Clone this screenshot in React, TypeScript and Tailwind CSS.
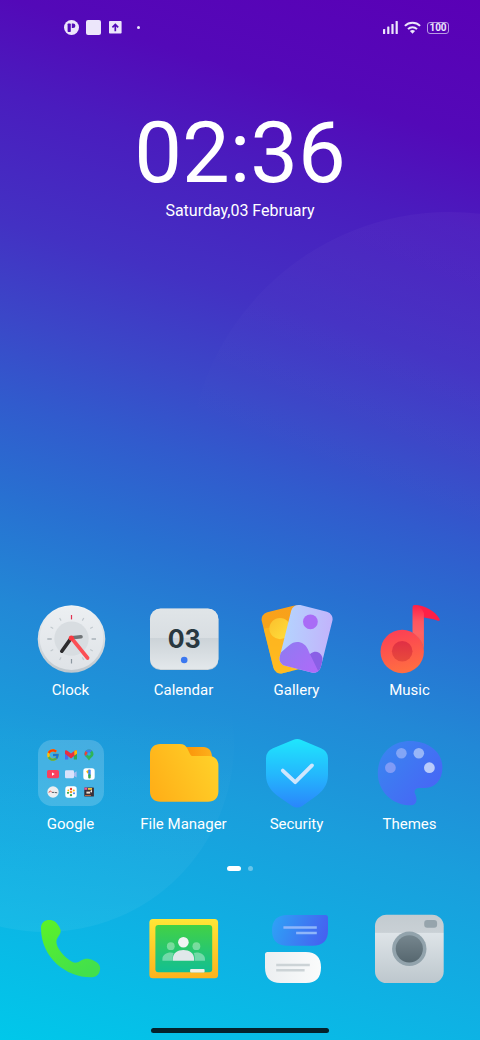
import type { ReactNode } from 'react';
import { FcGoogle } from 'react-icons/fc';

interface AppItem {
  name: string;
  icon: ReactNode;
}

function Wallpaper() {
  return (
    <svg
      className="absolute inset-0 h-full w-full"
      viewBox="0 0 480 1040"
      preserveAspectRatio="none"
      aria-hidden="true"
    >
      <defs>
        <linearGradient id="wpRight" x1="0.7" y1="0" x2="0.3" y2="1">
          <stop offset="0" stopColor="#fff" stopOpacity="0.035" />
          <stop offset="0.6" stopColor="#fff" stopOpacity="0" />
        </linearGradient>
        <linearGradient id="wpLeft" x1="0.5" y1="1" x2="0.5" y2="0">
          <stop offset="0" stopColor="#fff" stopOpacity="0.05" />
          <stop offset="0.6" stopColor="#fff" stopOpacity="0" />
        </linearGradient>
      </defs>
      <circle cx="450" cy="474" r="262" fill="url(#wpRight)" />
      <circle cx="45" cy="743" r="189" fill="url(#wpLeft)" />
    </svg>
  );
}

function StatusBar() {
  return (
    <header className="flex h-[55px] items-center justify-between pr-[31px] pl-16 text-[#ece6fb]">
      <div className="flex items-center gap-[7px]">
        <svg className="h-[15px] w-[15px]" viewBox="0 0 15 15">
          <circle cx="7.5" cy="7.5" r="7.5" fill="currentColor" />
          <rect x="3.6" y="3.4" width="3.2" height="8.6" rx="0.8" fill="#520cb9" />
          <path d="M7.8 3.4h1.3a2.3 2.3 0 0 1 0 4.6H7.8z" fill="#520cb9" />
        </svg>
        <svg className="h-[15px] w-[15px]" viewBox="0 0 15 15">
          <rect width="15" height="15" rx="2" fill="currentColor" />
        </svg>
        <svg className="ml-px h-[13px] w-[13px]" viewBox="0 0 13 13">
          <rect width="12.6" height="12.6" rx="0.8" fill="currentColor" />
          <path
            d="M6.3 10.2V3.6M3.4 6.3l2.9-2.9 2.9 2.9"
            fill="none"
            stroke="#520cb9"
            strokeWidth="1.7"
          />
        </svg>
        <span className="ml-2 h-[3px] w-[3px] rounded-full bg-[#ece6fb]" />
      </div>
      <div className="flex items-center gap-1.5">
        <svg className="h-[13px] w-[15px]" viewBox="0 0 15 13" fill="currentColor">
          <rect x="0" y="8" width="2.2" height="5" rx="0.6" />
          <rect x="4.2" y="5.4" width="2.2" height="7.6" rx="0.6" />
          <rect x="8.4" y="3" width="2.2" height="10" rx="0.6" />
          <rect x="12.6" y="0" width="2.2" height="13" rx="0.6" />
        </svg>
        <svg className="h-[13px] w-[17px]" viewBox="0 0 17 13" fill="none" stroke="currentColor">
          <path d="M0.9 4.9a10.8 10.8 0 0 1 15.2 0" strokeWidth="2" />
          <path d="M4 8.1a6.4 6.4 0 0 1 9 0" strokeWidth="2" />
          <path d="M8.5 12.8 5.9 10.1a3.8 3.8 0 0 1 5.2 0z" fill="currentColor" stroke="none" />
        </svg>
        <span className="flex h-3 w-[22px] items-center justify-center rounded-[3px] border border-[#b79be3] text-[10px] leading-none font-bold">
          100
        </span>
      </div>
    </header>
  );
}

function ClockIcon() {
  return (
    <svg className="h-[72px] w-[72px]" viewBox="0 0 72 72">
      <defs>
        <linearGradient id="clkRim" x1="0" y1="0" x2="0" y2="1">
          <stop offset="0" stopColor="#f1f4f6" />
          <stop offset="1" stopColor="#bfc7cd" />
        </linearGradient>
        <linearGradient id="clkFace" x1="0" y1="0" x2="0" y2="1">
          <stop offset="0" stopColor="#eceff2" />
          <stop offset="1" stopColor="#dfe3e7" />
        </linearGradient>
      </defs>
      <circle cx="36.5" cy="36" r="33.8" fill="url(#clkRim)" />
      <circle cx="36.5" cy="35.2" r="31.8" fill="url(#clkFace)" />
      <circle cx="36.5" cy="35.6" r="17.2" fill="#d8dde1" />
      <g strokeWidth="1.2">
        <path d="M36.5 12v4.4" stroke="#e2314f" />
        <path d="M36.5 56v4.4M12.3 36h4.4M56.600 36h4.4" stroke="#8b979f" />
        <path
          d="M24.6 15l1.5 2.6M48.8 15l-1.5 2.6M15.6 24l2.6 1.5M57.8 24l-2.6 1.5M15.6 48l2.6-1.5M57.8 48l-2.6-1.5M24.6 57l1.5-2.6M48.8 57l-1.5-2.6"
          stroke="#c2c9ce"
        />
      </g>
      <g strokeLinecap="round">
        <path d="M37 34.8l9-1" stroke="#707477" strokeWidth="3.6" />
        <path d="M36 35.4l-9.2 12.8" stroke="#2c2c2e" strokeWidth="3.6" />
        <path d="M36.4 35l16.2 20" stroke="#fb4f55" strokeWidth="3.6" />
      </g>
      <circle cx="36.3" cy="35" r="2.6" fill="#f9383f" />
    </svg>
  );
}

function CalendarIcon() {
  return (
    <svg className="h-[72px] w-[72px]" viewBox="0 0 72 72">
      <defs>
        <linearGradient id="calTop" x1="0" y1="0" x2="0" y2="1">
          <stop offset="0" stopColor="#e0e5e8" />
          <stop offset="0.48" stopColor="#d9dee2" />
          <stop offset="0.485" stopColor="#ccd3d8" />
          <stop offset="1" stopColor="#e3e8eb" />
        </linearGradient>
      </defs>
      <rect x="2" y="5.8" width="68.4" height="61.2" rx="10.5" fill="#c3ccd2" />
      <rect x="2" y="5.4" width="68.4" height="60.8" rx="10.5" fill="url(#calTop)" />
      <text
        x="36.2"
        y="45.4"
        textAnchor="middle"
        className="fill-[#293840] font-[Inter,sans-serif] text-[25px] font-bold"
      >
        03
      </text>
      <circle cx="36.2" cy="57" r="3.3" fill="#3b78f0" />
    </svg>
  );
}

function GalleryIcon() {
  return (
    <svg className="h-[72px] w-[72px]" viewBox="0 0 72 72">
      <defs>
        <linearGradient id="galBack" x1="0" y1="0" x2="0" y2="1">
          <stop offset="0" stopColor="#f9a01b" />
          <stop offset="0.3" stopColor="#f8a31a" />
          <stop offset="1" stopColor="#ffc226" />
        </linearGradient>
        <linearGradient id="galSun" x1="0" y1="0" x2="1" y2="1">
          <stop offset="0" stopColor="#fbc02d" />
          <stop offset="1" stopColor="#ffe03c" />
        </linearGradient>
        <linearGradient id="galFront" x1="0" y1="0.4" x2="1" y2="0.5">
          <stop offset="0" stopColor="#b0dcff" />
          <stop offset="1" stopColor="#c3b2fb" />
        </linearGradient>
        <linearGradient id="galHill" x1="0" y1="0" x2="1" y2="0.6">
          <stop offset="0" stopColor="#8a7df0" />
          <stop offset="1" stopColor="#ad6bf8" />
        </linearGradient>
        <clipPath id="galBackClip">
          <rect x="6" y="5" width="42" height="63" rx="7.5" transform="rotate(-14 27 36.5)" />
        </clipPath>
        <clipPath id="galClip">
          <rect x="23.8" y="4.5" width="42.4" height="62.6" rx="7.5" transform="rotate(14 45 36)" />
        </clipPath>
      </defs>
      <g clipPath="url(#galBackClip)">
        <rect x="-4" width="76" height="72" fill="url(#galBack)" />
        <path d="M-4 27l34-7v52H-4z" fill="#ffb91f" opacity="0.7" />
        <circle cx="19" cy="25.6" r="10.6" fill="url(#galSun)" />
      </g>
      <g clipPath="url(#galClip)">
        <rect x="10" width="62" height="72" fill="url(#galFront)" />
        <path d="M46 56c2-5 5.500-7.400 9-7.200 3.600.3 5.800 3.200 6.500 6.600L60 74z" fill="#8a5fe6" />
        <path
          d="M12 61c3-8 10.500-14 16-18.600 4.500-3.900 10-4.400 14.500-1.400 3 2 4.200 4.600 5.500 8L60 74H12z"
          fill="url(#galHill)"
        />
      </g>
      <circle cx="49.4" cy="18.8" r="7.4" fill="#a96cf6" />
    </svg>
  );
}

function MusicIcon() {
  return (
    <svg className="h-[72px] w-[72px]" viewBox="0 0 72 72">
      <defs>
        <linearGradient id="musDisc" x1="0" y1="0" x2="0.2" y2="1">
          <stop offset="0" stopColor="#fb3c56" />
          <stop offset="1" stopColor="#ff6c42" />
        </linearGradient>
        <linearGradient id="musStem" x1="0" y1="0" x2="0" y2="1">
          <stop offset="0" stopColor="#fd1f48" />
          <stop offset="0.35" stopColor="#ff5560" />
          <stop offset="0.6" stopColor="#ff6263" />
          <stop offset="1" stopColor="#fe6149" />
        </linearGradient>
        <linearGradient id="musHole" x1="0" y1="0" x2="0" y2="1">
          <stop offset="0" stopColor="#e02f45" />
          <stop offset="1" stopColor="#e84a3b" />
        </linearGradient>
      </defs>
      <path
        d="M40.5 1.900c9-.2 20.800 5.600 25 13.800.7 1.600-.2 2.500-1.600 2C59 15.800 55 15.300 50.200 14.400z"
        fill="#fd1f48"
      />
      <circle cx="28.2" cy="48.500" r="21.700" fill="url(#musDisc)" />
      <path
        d="M38.500 4.200q0-2.300 2.400-2.300 5 0 9 8V48.500C49.900 40 45 34 38.500 29.400z"
        fill="url(#musStem)"
      />
      <circle cx="28.2" cy="48.200" r="10.300" fill="url(#musHole)" />
    </svg>
  );
}

function GoogleFolderIcon() {
  return (
    <div className="flex h-[72px] w-[72px] items-center justify-center">
      <div className="grid h-[66px] w-[66px] grid-cols-3 content-center items-center justify-items-center gap-x-1 gap-y-1.5 rounded-[14px] bg-white/18 px-2">
        <FcGoogle className="h-3.5 w-3.5" />
        <svg className="h-3 w-3" viewBox="0 0 12 12">
          <path d="M0 2.500V10.500h3.200V5z" fill="#4a6cf0" />
          <path d="M12 2.500V10.500H8.800V5z" fill="#34a853" />
          <path
            d="M0 2.500C0 1 1.600 1 2.700 2L6 4.600 9.300 2C10.400 1 12 1 12 2.500v2.200L6 9.400 0 4.700z"
            fill="#e9303f"
          />
          <path d="M9.300 2C10.400 1 12 1 12 2.500v2.200L9.300 6.600z" fill="#fbbc04" />
        </svg>
        <svg className="h-3 w-3" viewBox="0 0 12 12">
          <path
            d="M6 .5a4.500 4.500 0 0 1 4.500 4.500c0 2.600-2.700 3.400-4.500 6.600C4.200 8.400 1.500 7.600 1.500 5A4.500 4.500 0 0 1 6 .5z"
            fill="#2fb457"
          />
          <path d="M6 .5A4.500 4.500 0 0 0 1.500 5l1 2.300L9 1.700A4.500 4.500 0 0 0 6 .5z" fill="#3b7df2" />
          <path d="M2.500 1.900 1.500 5l.8 2L5 4z" fill="#ea4335" />
          <circle cx="6" cy="5" r="1.700" fill="#25b0e6" />
        </svg>
        <svg className="h-3 w-3" viewBox="0 0 12 12">
          <rect x="0" y="2" width="12" height="8.200" rx="1.600" fill="#f9405f" />
          <path d="M5 4.500v3.200L7.700 6.100z" fill="#fff" />
        </svg>
        <svg className="h-3 w-3" viewBox="0 0 12 12">
          <path d="M8 5.500 11.600 3.200v6.200L8 7.400z" fill="#a8bdf0" />
          <rect x="0" y="2.200" width="9" height="8" rx="1.200" fill="#d9e2fb" />
        </svg>
        <svg className="h-3 w-3" viewBox="0 0 12 12">
          <rect x="0.300" y="0.300" width="11.400" height="11.400" rx="2.600" fill="#fff" />
          <path d="M3.200 3.200 6 1.600V5L4.300 5.400z" fill="#fbbc04" />
          <rect x="5.200" y="1.600" width="2.500" height="6" rx="1" fill="#4285f4" />
          <rect x="5.200" y="6.200" width="2.500" height="4.200" rx="1" fill="#34a853" />
        </svg>
        <svg className="h-3 w-3" viewBox="0 0 12 12">
          <circle cx="6" cy="6" r="5.700" fill="#eceef0" />
          <path d="M2 6.700c0-2 2.400-2 2.600-.4" fill="none" stroke="#e8524a" strokeWidth="1" />
          <path d="M5 6.400h2.400M8 6.500l2.200.3" fill="none" stroke="#566069" strokeWidth="1" />
        </svg>
        <svg className="h-3 w-3" viewBox="0 0 12 12">
          <rect x="0.300" y="0.300" width="11.400" height="11.400" rx="2.600" fill="#fff" />
          <circle cx="6" cy="3" r="1.200" fill="#ea4335" />
          <circle cx="8.800" cy="4.500" r="1" fill="#fbbc04" />
          <circle cx="3.300" cy="4.300" r="0.900" fill="#fbbc04" />
          <circle cx="3" cy="6.800" r="1.100" fill="#34a853" />
          <circle cx="9" cy="7.200" r="1" fill="#4285f4" />
          <circle cx="6" cy="6" r="1.300" fill="#f5952f" />
          <circle cx="6" cy="9.100" r="1.200" fill="#34a853" />
        </svg>
        <svg className="h-3 w-3" viewBox="0 0 12 12">
          <rect x="1.300" y="1.600" width="9.600" height="9" rx="0.600" fill="#3a2f38" />
          <path d="M1.300 1.600h3v2.200h-3z" fill="#e85a9a" />
          <path d="M5 2h4v1.800H5z" fill="#f0c33c" />
          <path d="M3.400 5.600h3.800v2H3.400z" fill="#e8dfd0" />
          <path d="M7 5.300l2-1.500v3z" fill="#f7efe0" />
          <path d="M2 9h6v1H2z" fill="#c0653a" />
        </svg>
      </div>
    </div>
  );
}

function FileManagerIcon() {
  return (
    <svg className="h-[72px] w-[72px]" viewBox="0 0 72 72">
      <defs>
        <linearGradient id="fmBody" x1="0" y1="0.700" x2="1" y2="0.300">
          <stop offset="0" stopColor="#ffb018" />
          <stop offset="1" stopColor="#ffd129" />
        </linearGradient>
        <linearGradient id="fmTab" x1="0" y1="0" x2="1" y2="0">
          <stop offset="0" stopColor="#fb9208" />
          <stop offset="1" stopColor="#fdb01b" />
        </linearGradient>
      </defs>
      <path d="M36 10h19.500c5 0 8 3.500 8.500 9.500V24H40z" fill="url(#fmTab)" />
      <path
        d="M12.500 7h19.500c3.700 0 5.600 1.400 7.300 4.600l2.700 5.400c.9 1.700 1.700 2.100 3.600 2.100h15.400c5.600 0 9.400 3.700 9.400 9.300V54.500c0 6.300-4 10.200-10.300 10.200H12.500c-6.500 0-10.500-4-10.500-10.300V17.400C2 11 6 7 12.500 7z"
        fill="url(#fmBody)"
      />
    </svg>
  );
}

function SecurityIcon() {
  return (
    <svg className="h-[72px] w-[72px]" viewBox="0 0 72 72">
      <defs>
        <linearGradient id="secBody" x1="0" y1="0" x2="0" y2="1">
          <stop offset="0" stopColor="#1fe6fd" />
          <stop offset="0.500" stopColor="#24b9fd" />
          <stop offset="1" stopColor="#2a86fb" />
        </linearGradient>
      </defs>
      <path
        d="M32 3q4.200-1.900 8.400 0L60 11.300q7 3 7 10V38c0 10.500-6 17-13.500 22.200L41.200 69q-5 3.200-10 0L18.500 60.200C11 55 5 48.500 5 38V21.300q0-7 7-10z"
        fill="url(#secBody)"
      />
      <path
        d="M21.800 33.600 34.200 45.200 51 28.400"
        fill="none"
        stroke="#cfe6fd"
        strokeWidth="3.800"
        strokeLinecap="round"
        strokeLinejoin="round"
      />
    </svg>
  );
}

function ThemesIcon() {
  return (
    <svg className="h-[72px] w-[72px]" viewBox="0 0 72 72">
      <defs>
        <linearGradient id="thmBody" x1="0" y1="0.200" x2="0.800" y2="0.800">
          <stop offset="0" stopColor="#3a84f0" />
          <stop offset="1" stopColor="#4668f5" />
        </linearGradient>
      </defs>
      <path
        d="M36 4C54.500 4 68.400 15 68.400 30.500 68.400 43 61 50.900 51 51h-5.500c-3.800 0-5.800 2.600-4.600 5.600 1.200 2.600 1.900 4.700 1.500 7.200-.5 3-2.600 4.500-5.600 4.500C18 68.300 3.800 54 3.800 36.200 3.800 17 18 4 36 4z"
        fill="url(#thmBody)"
      />
      <circle cx="16.400" cy="30.700" r="5.400" fill="#809bf6" />
      <circle cx="27.400" cy="16.300" r="5.300" fill="#82a5f6" />
      <circle cx="44.800" cy="16.300" r="5.300" fill="#97b6f8" />
      <circle cx="55.400" cy="30.700" r="5.400" fill="#b9cbfb" />
    </svg>
  );
}

function PhoneIcon() {
  return (
    <svg className="h-[72px] w-[72px]" viewBox="0 0 72 72">
      <defs>
        <linearGradient id="phBody" x1="0" y1="0" x2="0.600" y2="1">
          <stop offset="0" stopColor="#5cf227" />
          <stop offset="1" stopColor="#42e04c" />
        </linearGradient>
      </defs>
      <path
        d="M6 15C6 9.500 10 7 14.300 7c5 0 7.400 2.600 9.900 6.800 1.900 3.200 2 5.500.2 8.300-2.300 3.200-3.500 5.300-2.800 8.700C23 37.500 32.500 47 38 49.300c3 1 5-.1 8-1.900 4.200-2.300 7.500-2 12-.2 5.500 2.300 7.800 5.800 7 9.500-.8 4.800-3.500 7.600-9.500 7.600C31.500 64.300 6 45 6 15z"
        fill="url(#phBody)"
      />
    </svg>
  );
}

function ClassroomIcon() {
  return (
    <svg className="h-[72px] w-[72px]" viewBox="0 0 72 72">
      <defs>
        <linearGradient id="crFrame" x1="0" y1="0" x2="0" y2="1">
          <stop offset="0" stopColor="#ffe636" />
          <stop offset="1" stopColor="#fdb21d" />
        </linearGradient>
        <linearGradient id="crBoard" x1="0" y1="0" x2="0" y2="1">
          <stop offset="0" stopColor="#42d145" />
          <stop offset="1" stopColor="#12bf92" />
        </linearGradient>
      </defs>
      <rect x="1.400" y="6" width="68.700" height="59.300" rx="3.500" fill="url(#crFrame)" />
      <rect x="7.400" y="12" width="56.800" height="47.300" rx="3" fill="url(#crBoard)" />
      <g fill="#fff" fillOpacity="0.360">
        <circle cx="22.800" cy="33.200" r="3.900" />
        <circle cx="48.400" cy="33.200" r="3.900" />
        <path d="M14.400 47.700v-1.500c0-4.200 4-6.600 8.300-6.600 1.200 0 2.200.2 3 .5-1 2.200-1.100 4.600-1.100 7.600z" />
        <path d="M57 47.700v-1.500c0-4.200-4-6.600-8.300-6.600-1.200 0-2.200.2-3 .5 1 2.200 1.100 4.600 1.100 7.600z" />
      </g>
      <circle cx="35.400" cy="29.200" r="5.300" fill="#f1f3f4" />
      <path d="M24.800 47.700v-1.600C24.800 40 29.600 37 35.400 37s10.700 3 10.700 9.100v1.600z" fill="#e0e8ea" />
      <rect x="42.100" y="56" width="14.500" height="3.400" rx="1" fill="#eff0e6" />
    </svg>
  );
}

function MessagesIcon() {
  return (
    <svg className="h-[72px] w-[72px]" viewBox="0 0 72 72">
      <defs>
        <linearGradient id="msgBlue" x1="0" y1="0.400" x2="1" y2="0.600">
          <stop offset="0" stopColor="#2f9ff6" />
          <stop offset="1" stopColor="#4660f0" />
        </linearGradient>
        <linearGradient id="msgWhite" x1="0" y1="0" x2="1" y2="0">
          <stop offset="0" stopColor="#eceff1" />
          <stop offset="1" stopColor="#fafbfb" />
        </linearGradient>
      </defs>
      <path
        d="M26.500 1.900H64.500q2.500 0 2.500 2.500V17.500Q67 32.700 51.500 32.700H26.500Q11 32.700 11 17.300T26.500 1.900z"
        fill="url(#msgBlue)"
      />
      <path
        d="M6.500 38.900H44.800Q60 38.900 60 54.500T44.800 70H19.500Q4 70 4 54.500V41.400Q4 38.900 6.500 38.900z"
        fill="url(#msgWhite)"
      />
      <path d="M22.400 14.600H55.800M35.100 20H55.800" stroke="#8fb6fa" strokeWidth="2.500" />
      <path d="M15.200 51.900H48.800M15.200 57.200H43.600" stroke="#ccd3d6" strokeWidth="2.500" />
    </svg>
  );
}

function CameraIcon() {
  return (
    <svg className="h-[72px] w-[72px]" viewBox="0 0 72 72">
      <defs>
        <linearGradient id="camBody" x1="0" y1="0" x2="0" y2="1">
          <stop offset="0" stopColor="#c3cbd0" />
          <stop offset="0.260" stopColor="#c9d0d5" />
          <stop offset="0.265" stopColor="#dee4e8" />
          <stop offset="1" stopColor="#bdc7cd" />
        </linearGradient>
        <linearGradient id="camLens" x1="0" y1="0" x2="0" y2="1">
          <stop offset="0" stopColor="#76868e" />
          <stop offset="1" stopColor="#56676f" />
        </linearGradient>
      </defs>
      <rect x="1" y="1.700" width="68.700" height="68.300" rx="11.500" fill="url(#camBody)" />
      <circle cx="35.300" cy="35.800" r="17.200" fill="#92a3ac" />
      <circle cx="35.300" cy="35.800" r="13.600" fill="url(#camLens)" />
      <rect x="50.200" y="7" width="12.900" height="7.800" rx="3" fill="#96a4ac" />
    </svg>
  );
}

const apps: AppItem[] = [
  { name: 'Clock', icon: <ClockIcon /> },
  { name: 'Calendar', icon: <CalendarIcon /> },
  { name: 'Gallery', icon: <GalleryIcon /> },
  { name: 'Music', icon: <MusicIcon /> },
  { name: 'Google', icon: <GoogleFolderIcon /> },
  { name: 'File Manager', icon: <FileManagerIcon /> },
  { name: 'Security', icon: <SecurityIcon /> },
  { name: 'Themes', icon: <ThemesIcon /> },
];

const dock: AppItem[] = [
  { name: 'Phone', icon: <PhoneIcon /> },
  { name: 'Classroom', icon: <ClassroomIcon /> },
  { name: 'Messages', icon: <MessagesIcon /> },
  { name: 'Camera', icon: <CameraIcon /> },
];

export default function App() {
  return (
    <div className="relative min-h-screen bg-[linear-gradient(197deg,#5a00b6_0%,#5309b8_12%,#4a1cbe_20%,#4331c3_31%,#3b47c8_39%,#315bcd_46%,#2870d1_54%,#2288d6_63%,#1a9edc_74%,#0eb2e4_87%,#00c8ea_100%)] font-[Roboto,sans-serif] text-white">
      <Wallpaper />
      <div className="relative flex min-h-screen flex-col pb-[7px]">
        <StatusBar />
        <section className="flex flex-col items-center pt-[54px]">
          <h1 className="text-[85px] leading-[88px]">02:36</h1>
          <p className="mt-0.5 text-base leading-6">Saturday,03 February</p>
        </section>
        <main className="mt-auto grid grid-cols-4 gap-y-[35px] px-3.5">
          {apps.map((app) => (
            <button key={app.name} className="flex flex-col items-center gap-[3px]">
              {app.icon}
              <span className="text-[15px] leading-6 whitespace-nowrap">{app.name}</span>
            </button>
          ))}
        </main>
        <div className="mt-[30px] flex justify-center gap-[7px]">
          <span className="h-[5px] w-3.5 rounded-full bg-white" />
          <span className="h-[5px] w-[5px] rounded-full bg-white/35" />
        </div>
        <nav className="mt-[42px] grid grid-cols-4 px-3.5">
          {dock.map((app) => (
            <button key={app.name} aria-label={app.name} className="flex justify-center">
              {app.icon}
            </button>
          ))}
        </nav>
        <div className="mt-[43px] h-[5px] w-[37%] self-center rounded-full bg-[#04222c]" />
      </div>
    </div>
  );
}
